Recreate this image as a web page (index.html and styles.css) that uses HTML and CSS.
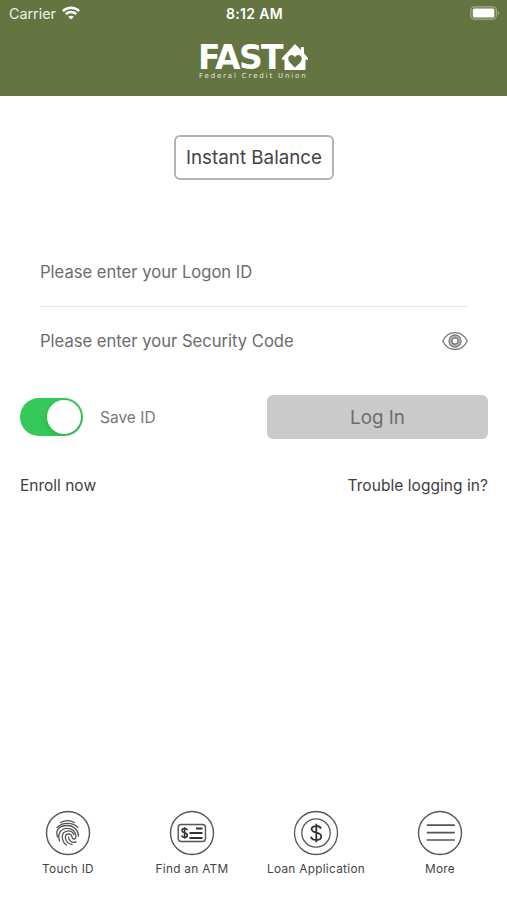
FILE: index.html
```html
<!DOCTYPE html>
<html lang="en">
<head>
<meta charset="utf-8">
<title>FAST Federal Credit Union</title>
<link rel="stylesheet" href="styles.css">
</head>
<body>
<div class="app">
  <header class="header">
    <div class="status">
      <div class="carrier"><span>Carrier</span>
        <svg class="wifi" width="18" height="14" viewBox="0 0 18 14" fill="none" stroke="#fff" stroke-width="2.5"><path d="M.9 5.2C5.4.7 12.6.7 17.1 5.2M3.8 8.2C6.8 5.4 11.2 5.4 14.2 8.2"/><path d="M6.2 10.7Q9 8.6 11.8 10.7L9 13.6Z" fill="#fff" stroke="none"/></svg>
      </div>
      <div class="time">8:12 AM</div>
      <svg class="battery" width="30" height="14" viewBox="0 0 30 14"><rect x=".8" y=".8" width="25.6" height="12.4" rx="3.6" fill="none" stroke="#a2ad88" stroke-width="1.2"/><rect x="2.8" y="2.6" width="21.600" height="8.8" rx="1.500" fill="#fff"/><path d="M27.6 4.7Q30.8 7 27.6 9.3Z" fill="#a2ad88"/></svg>
    </div>
    <div class="logo">
      <div class="brand"><span class="fast">FAST</span>
        <svg class="house" width="26" height="26" viewBox="0 0 26 26"><path fill="#fff" d="M13 0 19 6V3h3v6.200L26 14v1.800h-2.500V26h-21V15.800H0V14Z"/><path fill="#647541" d="M13 23.500C9 19.600 6.200 17.700 6.200 14.700c0-4 5-4.900 6.800-1.400 1.800-3.500 6.800-2.600 6.800 1.400C19.800 17.700 17 19.600 13 23.500Z"/></svg>
      </div>
      <div class="tagline">Federal Credit Union</div>
    </div>
  </header>
  <main class="main">
    <button class="balance"><span>Instant Balance</span></button>
    <div class="fields">
      <div class="field first"><span class="placeholder">Please enter your Logon ID</span></div>
      <div class="field second"><span class="placeholder">Please enter your Security Code</span>
        <svg width="26" height="20" viewBox="0 0 26 20" fill="none" stroke="#777" stroke-width="1.300"><path d="M.8 10C6-1.300 20-1.300 25.200 10 20 21.300 6 21.300.8 10Z"/><circle cx="13" cy="10" r="6"/><circle cx="13" cy="10" r="3.200" stroke-width="1.500"/><circle cx="13" cy="10" r="4.600" stroke="#aaa"/></svg>
      </div>
    </div>
    <div class="actions">
      <div class="toggle"><span class="knob"></span></div>
      <span class="save">Save ID</span>
      <button class="login"><span>Log In</span></button>
    </div>
    <div class="links"><span>Enroll now</span><span class="trouble">Trouble logging in?</span></div>
  </main>
  <nav class="nav">
    <div class="item">
      <svg width="46" height="46" viewBox="0 0 46 46" fill="none" stroke="#555" stroke-width="1.400"><circle cx="23" cy="23" r="21.500"/><g stroke-width="1.300" stroke-linecap="round"><path d="M15.500 12.500Q22.500 8.700 29.500 12.500M12 17.500C17 12 28 12 33 17.500"/><path d="M12.500 27C10 19 15 15.500 22 15.500 29 15.500 33.500 20.500 33.500 26"/><path d="M14.500 31C12.200 23.500 16 18.300 22 18.300 27.500 18.300 30.500 22 31 26.500 31 29.500 27.500 30 27 27 26.300 22.800 20.200 23 20.300 27.500 20.800 31.500 23.500 33.800 27 34.500"/><path d="M21.500 35C18.500 33 17.200 29.500 17.300 26.500 17.500 19.800 26.500 19.300 28.700 24.500M23.600 27C23.800 31.500 27 33 31 32"/></g></svg>
      <span class="label">Touch ID</span>
    </div>
    <div class="item">
      <svg width="46" height="46" viewBox="0 0 46 46" fill="none" stroke="#555" stroke-width="1.400"><circle cx="23" cy="23" r="21.500"/><rect x="9.200" y="14.500" width="27.300" height="17" rx="3"/><g stroke="#333" stroke-width="1.600"><path d="M18.300 20.200C17.500 17.800 12.900 18 13 20.700 13.200 23.600 18.300 22.100 18.300 25.200 18.200 28 13.500 28 12.600 25.500M15.600 17.300V28.800"/><path d="M27 18.500h6.500M20.500 23.100h13M20.500 28h13" stroke-width="2"/></g></svg>
      <span class="label">Find an ATM</span>
    </div>
    <div class="item">
      <svg width="46" height="46" viewBox="0 0 46 46" fill="none" stroke="#555" stroke-width="1.300"><circle cx="23" cy="23" r="21.500"/><circle cx="23" cy="23" r="14.200"/><path d="M27.900 18.600C26.600 14.800 18.400 15.300 18.600 19.300 18.900 23.800 28.300 21.500 28.300 26.500 28.200 31 19.200 31.200 17.900 26.800M23.300 13.800V32.200" stroke="#333" stroke-width="1.800"/></svg>
      <span class="label">Loan Application</span>
    </div>
    <div class="item">
      <svg width="46" height="46" viewBox="0 0 46 46" fill="none" stroke="#555" stroke-width="1.400"><circle cx="23" cy="23" r="21.500"/><path d="M9.800 15.200h28M9.800 22.600h28M9.800 30h28" stroke-width="1.700"/></svg>
      <span class="label">More</span>
    </div>
  </nav>
</div>
</body>
</html>
```
FILE: styles.css
```css
* { box-sizing: border-box; }
body { margin: 0; background: #fff; font-family: Inter, "Liberation Sans", sans-serif; color: #444; }
button { font-family: inherit; padding: 0; display: flex; align-items: center; justify-content: center; }
span, .time, .tagline { white-space: nowrap; }
svg { display: block; flex: none; }
.app { width: 507px; height: 900px; display: flex; flex-direction: column; }
.header { height: 96px; background: #647541; color: #fff; }
.status { height: 28px; padding: 0 7px 0 9px; display: grid; grid-template-columns: 1fr auto 1fr; align-items: center; }
.carrier { display: flex; align-items: center; gap: 6px; height: 26px; margin-bottom: 2px; font-size: 14.300px; color: #eef0e9; }
.time { font-size: 14px; font-weight: 600; letter-spacing: .3px; margin-bottom: 2px; }
.battery { justify-self: end; margin-bottom: 2px; }
.logo { width: 110px; margin: 16px 0 0 198px; }
.brand { display: flex; height: 27px; align-items: flex-start; }
.fast { width: 84px; font: 700 33px/27px "DejaVu Sans", sans-serif; letter-spacing: -1.700px; }
.tagline { padding-left: 1px; font: 7px/11px "DejaVu Sans", sans-serif; letter-spacing: 1.850px; color: #e6e9df; }
.main { flex: 1; display: flex; flex-direction: column; }
.balance { width: 160px; height: 45px; margin: 39px 0 0 174px; border: 2px solid #b3b3b3; border-radius: 6px; background: #fff; font-size: 18.800px; color: #444; }
.fields { margin: 58px 39px 0 40px; }
.field { height: 69px; display: flex; align-items: center; justify-content: space-between; font-size: 16.600px; color: #6c6c6c; }
.first { border-bottom: 1px solid #e4e4e4; }
.second { height: 68px; }
.actions { height: 44px; margin: 20px 19px 0 20px; display: flex; align-items: center; }
.toggle { width: 63px; height: 38px; border-radius: 19px; background: #34c759; padding: 2px; display: flex; justify-content: flex-end; }
.knob { width: 34px; height: 34px; border-radius: 50%; background: #fff; box-shadow: 0 2px 4px #0002; }
.save { margin-left: 17px; font-size: 15.500px; color: #777; }
.login { margin-left: auto; width: 221px; height: 44px; border: 0; border-radius: 6px; background: #cacaca; color: #6d6d6d; font-size: 18.800px; }
.links { height: 24px; margin: 34px 19px 0 20px; display: flex; align-items: center; justify-content: space-between; font-size: 15.500px; color: #3d3d3d; }
.trouble { letter-spacing: .05px; }
.nav { height: 90px; padding: 0 5px 0 6px; display: grid; grid-template-columns: repeat(4, 1fr); }
.item { display: flex; flex-direction: column; align-items: center; gap: 5px; }
.label { font-size: 11.800px; line-height: 16px; letter-spacing: .3px; color: #444; }
```
